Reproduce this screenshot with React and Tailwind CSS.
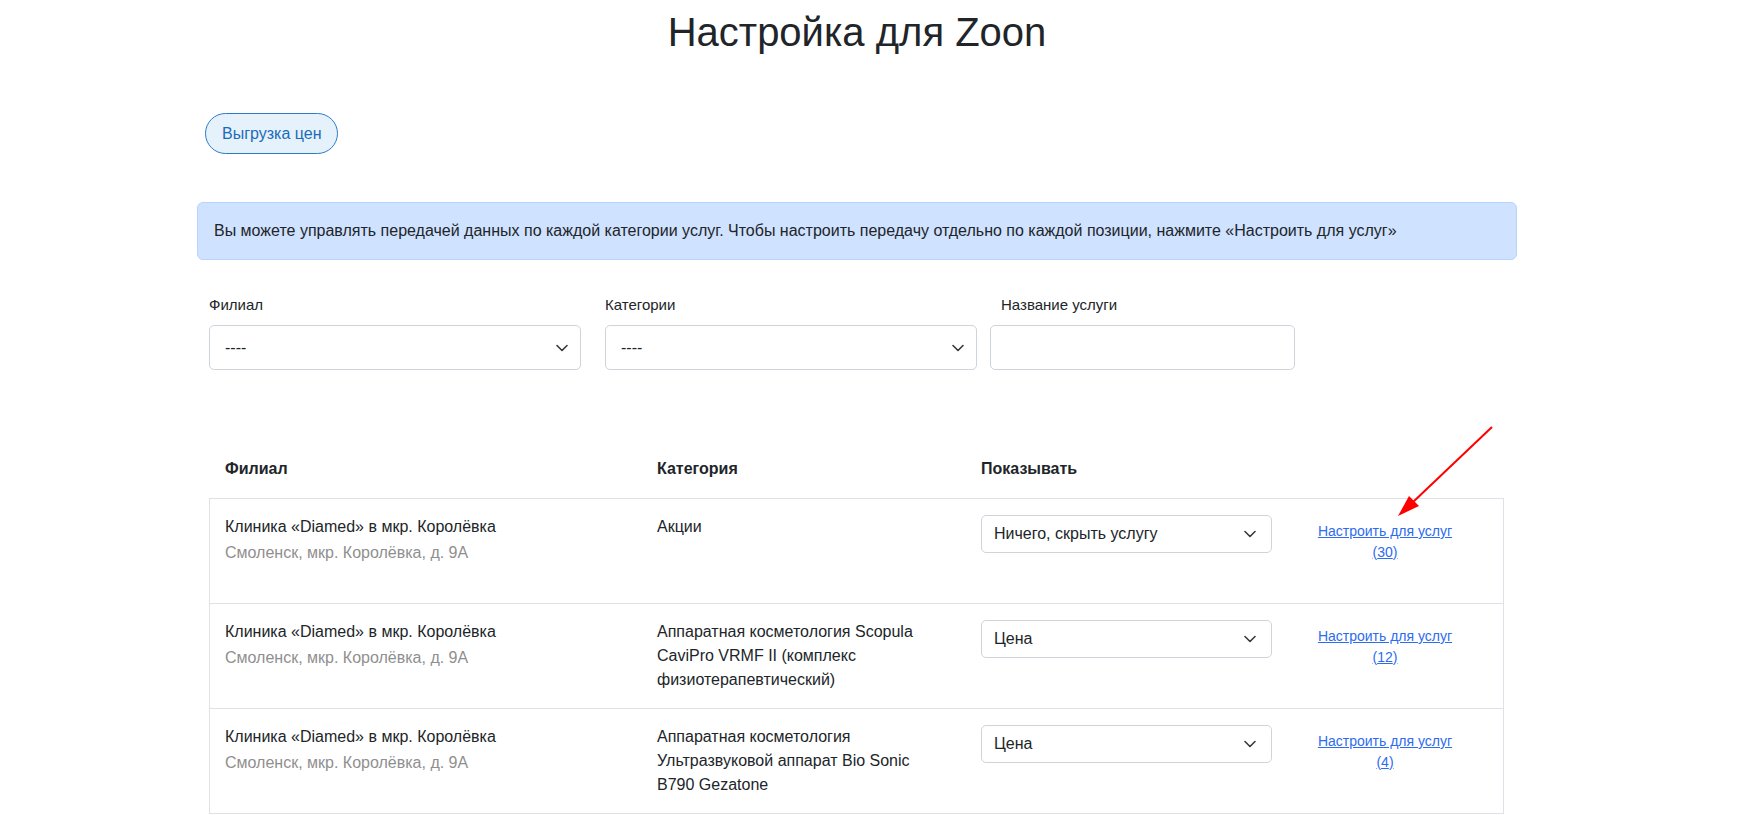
import React from "react";

const rows = [
  {
    category: "Акции",
    show: "Ничего, скрыть услугу",
    count: 30,
  },
  {
    category: "Аппаратная косметология Scopula CaviPro VRMF II (комплекс физиотерапевтический)",
    show: "Цена",
    count: 12,
  },
  {
    category: "Аппаратная косметология Ультразвуковой аппарат Bio Sonic B790 Gezatone",
    show: "Цена",
    count: 4,
  },
];

function Chevron() {
  return (
    <svg width="12" height="8" viewBox="0 0 12 8" fill="none">
      <path d="M1 1.5l5 5 5-5" stroke="#343a40" strokeWidth="1.6" strokeLinecap="round" strokeLinejoin="round" />
    </svg>
  );
}

function FakeSelect({ value, className }) {
  return (
    <div
      className={`flex items-center justify-between border border-[#ced4da] rounded-[5px] bg-white text-[16px] text-[#212529] ${className}`}
    >
      <span>{value}</span>
      <Chevron />
    </div>
  );
}

export default function App() {
  return (
    <div className="relative min-h-screen bg-white text-[#212529] font-['Liberation_Sans',Arial,sans-serif]">
      <div className="ml-[197px] w-[1320px]">
        {/* Header */}
        <h1 className="pt-[8px] text-center text-[40px] leading-[48px] font-normal">Настройка для Zoon</h1>

        <button className="mt-[57px] ml-[8px] h-[41px] px-[16px] rounded-full border border-[#2b7bc9] bg-[#e6f2fb] text-[16px] text-[#1b6bb8]">
          Выгрузка цен
        </button>

        {/* Info */}
        <div className="mt-[48px] h-[58px] flex items-center px-[16px] border border-[#b6d4fe] bg-[#cfe2ff] rounded-[6px] text-[16px]">
          Вы можете управлять передачей данных по каждой категории услуг. Чтобы настроить передачу отдельно по каждой позиции, нажмите «Настроить для услуг»
        </div>

        {/* Filters */}
        <div className="ml-[12px] mt-[34px] flex items-end">
          <div className="w-[372px]">
            <div className="text-[15px] leading-[22px]">Филиал</div>
            <FakeSelect value="----" className="mt-[9px] h-[45px] pl-[15px] pr-[12px] w-full" />
          </div>
          <div className="ml-[24px] w-[372px]">
            <div className="text-[15px] leading-[22px]">Категории</div>
            <FakeSelect value="----" className="mt-[9px] h-[45px] pl-[15px] pr-[12px] w-full" />
          </div>
          <div className="ml-[13px] w-[305px]">
            <div className="pl-[11px] text-[15px] leading-[22px]">Название услуги</div>
            <div className="mt-[9px] h-[45px] w-full border border-[#ced4da] rounded-[5px] bg-white" />
          </div>
        </div>

        {/* Table */}
        <div className="ml-[12px] w-[1295px] mt-[87px] text-[16px]">
          <div className="flex font-bold leading-[24px] pb-[17px] border-b border-[#dee2e6]">
            <div className="w-[432px] pl-[16px]">Филиал</div>
            <div className="w-[323px] pl-[16px]">Категория</div>
            <div className="w-[325px] pl-[17px]">Показывать</div>
            <div className="flex-1" />
          </div>
          <div className="border-x border-[#dee2e6]">
            {rows.map((r, i) => (
              <div key={i} className="flex h-[105px] border-b border-[#dee2e6] leading-[24px]">
                <div className="w-[431px] pl-[15px] pt-[16px]">
                  <div>Клиника «Diamed» в мкр. Королёвка</div>
                  <div className="mt-[2px] text-[#8f8f8f]">Смоленск, мкр. Королёвка, д. 9А</div>
                </div>
                <div className="w-[323px] px-[16px] pt-[16px]">{r.category}</div>
                <div className="w-[325px] px-[17px] pt-[16px]">
                  <FakeSelect value={r.show} className="h-[38px] pl-[12px] pr-[15px] w-full" />
                </div>
                <div className="flex-1 pt-[22px]">
                  <a href="#" className="block ml-[21px] w-[150px] text-center text-[14px] leading-[21px] text-[#2d6cf0] underline">
                    Настроить для услуг
                    <br />({r.count})
                  </a>
                </div>
              </div>
            ))}
          </div>
        </div>
      </div>

      {/* Annotation arrow */}
      <svg className="absolute left-0 top-0 pointer-events-none" width="1739" height="815" viewBox="0 0 1739 815">
        <line x1="1492" y1="427" x2="1412" y2="503" stroke="#ff0000" strokeWidth="2" />
        <polygon points="1398,516 1409,496 1419,506" fill="#ff0000" />
      </svg>
    </div>
  );
}
